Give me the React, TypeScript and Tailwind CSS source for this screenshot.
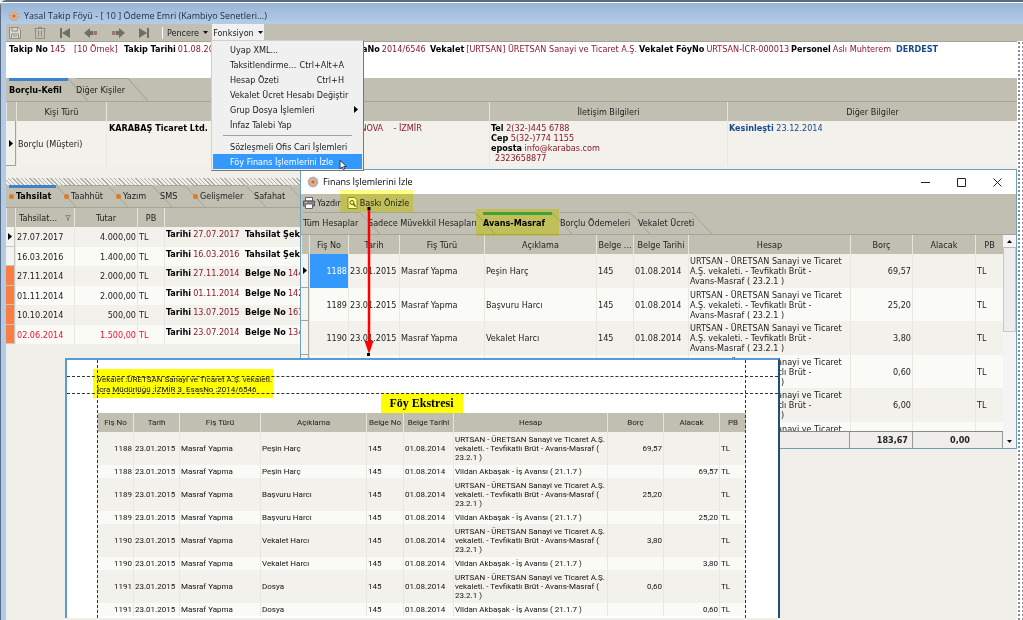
import React from 'react';

const UI_FONT = "font-['DejaVu_Sans_Condensed','DejaVu_Sans',sans-serif]";
const CAPTION_FONT = "font-['Open_Sans','Noto_Sans',sans-serif]";
const NARROW_FONT = "font-['Roboto','Liberation_Sans',sans-serif]";

type CollectionRow = {
  date: string;
  amount: string;
  docDate: string;
  label: string;
  value: string;
  marked?: boolean;
  overdue?: boolean;
};

const collections: CollectionRow[] = [
  { date: '27.07.2017', amount: '4.000,00', docDate: '27.07.2017', label: 'Tahsilat Şekli', value: '' },
  { date: '16.03.2016', amount: '1.400,00', docDate: '16.03.2016', label: 'Tahsilat Şekli', value: '' },
  { date: '27.11.2014', amount: '2.000,00', docDate: '27.11.2014', label: 'Belge No', value: '144', marked: true },
  { date: '01.11.2014', amount: '2.000,00', docDate: '01.11.2014', label: 'Belge No', value: '142', marked: true },
  { date: '10.10.2014', amount: '500,00', docDate: '13.07.2015', label: 'Belge No', value: '161', marked: true },
  { date: '02.06.2014', amount: '1.500,00', docDate: '23.07.2014', label: 'Belge No', value: '134', marked: true, overdue: true },
];

const financeRows = [
  { no: '1188', name: 'Peşin Harç', debit: '69,57' },
  { no: '1189', name: 'Başvuru Harcı', debit: '25,20' },
  { no: '1190', name: 'Vekalet Harcı', debit: '3,80' },
  { no: '1191', name: 'Dosya', debit: '0,60' },
  { no: '1192', name: 'Vekalet Pulu', debit: '6,00' },
  { no: '1193', name: 'Tebligat', debit: '' },
];

const reportRows = [
  { no: '1188', name: 'Peşin Harç', amount: '69,57' },
  { no: '1189', name: 'Başvuru Harcı', amount: '25,20' },
  { no: '1190', name: 'Vekalet Harcı', amount: '3,80' },
  { no: '1191', name: 'Dosya', amount: '0,60' },
];

const FINANCE_ACCOUNT = 'URTSAN - ÜRETSAN Sanayi ve Ticaret\nA.Ş. vekaleti. - Tevfikatlı Brüt -\nAvans-Masraf ( 23.2.1 )';
const REPORT_ACCOUNT = 'URTSAN - ÜRETSAN Sanayi ve Ticaret A.Ş.\nvekaleti. - Tevfikatlı Brüt - Avans-Masraf (\n23.2.1 )';

const AppLogo = () => (
  <svg viewBox="0 0 12 12" className="size-3 shrink-0">
    <circle cx="6" cy="6" r="5.4" fill="#c9b9ae" />
    <circle cx="6" cy="6" r="4.2" fill="none" stroke="#a8a4a6" strokeWidth="1.2" strokeDasharray="2 1.2" />
    <circle cx="6" cy="6" r="2.6" fill="#f0a878" />
    <circle cx="6" cy="6" r="1.5" fill="#d9691e" />
  </svg>
);

const SaveIcon = () => (
  <svg viewBox="0 0 12 12" className="size-3" fill="none" stroke="#8f8f86">
    <path d="M.5.5h9l2 2v9H.5z" fill="#d8d8d0" />
    <path d="M3 .5V4h5.5V.5M2.5 11.5V7h7v4.5M4 9h4" />
  </svg>
);

const TrashIcon = () => (
  <svg viewBox="0 0 12 12" className="size-3" fill="none" stroke="#8f8f86">
    <path d="M.5 1.5h11M4 .5h4M1.5 1.5v10h9v-10M4.5 3.5v6M7.5 3.5v6" />
  </svg>
);

const FirstIcon = () => (
  <svg viewBox="0 0 12 12" className="size-3" fill="#6f6f68">
    <path d="M1 1h2v10H1zM3 6l8-5v10z" />
  </svg>
);

const PrevIcon = () => (
  <svg viewBox="0 0 14 12" className="h-3 w-3.5" fill="#6f6f68">
    <path d="M0 6l6-5v3h3v4H6v3z" />
    <path d="M9.5 4H13v4H9.5z" fill="#a37566" />
  </svg>
);

const NextIcon = () => (
  <svg viewBox="0 0 14 12" className="h-3 w-3.5" fill="#6f6f68">
    <path d="M14 6L8 1v3H5v4h3v3z" />
    <path d="M1 4h3.5v4H1z" fill="#a37566" />
  </svg>
);

const LastIcon = () => (
  <svg viewBox="0 0 12 12" className="size-3" fill="#6f6f68">
    <path d="M9 1h2v10H9zM9 6L1 1v10z" />
  </svg>
);

const PrinterIcon = () => (
  <svg viewBox="0 0 12 12" className="size-3">
    <path d="M2.5.5h7V4h-7z" fill="#fff" stroke="#666" />
    <path d="M.5 4h11v5H.5z" fill="#88888a" stroke="#555" />
    <path d="M2.5 7h7v4.5h-7z" fill="#fff" stroke="#666" />
    <path d="M2 5.5h1.5" stroke="#ddd" />
  </svg>
);

const PreviewIcon = () => (
  <svg viewBox="0 0 11 12" className="h-3 w-[11px]" fill="none">
    <path d="M1 .5h6.5L10 3v8.5H1z" fill="#fff" stroke="#88885a" />
    <circle cx="5" cy="5.5" r="2" stroke="#55553a" />
    <path d="M6.5 7l2 2.5" stroke="#55553a" strokeWidth="1.3" />
  </svg>
);

const CaretDown = () => (
  <svg viewBox="0 0 5 3" className="h-[3px] w-[5px]">
    <path d="M0 0h5L2.5 3z" fill="#111" />
  </svg>
);

const RowPointer = () => (
  <svg viewBox="0 0 4 7" className="mx-auto h-[7px] w-1">
    <path d="M0 0l4 3.5L0 7z" fill="#000" />
  </svg>
);

interface TabProps {
  label: string;
  width: string;
  active?: boolean;
  dot?: boolean;
  accent?: string;
}

const Tab: React.FC<TabProps> = ({ label, width, active, dot, accent = 'bg-[#3c82cc]' }) => (
  <button
    role="tab"
    aria-selected={!!active}
    className={`relative flex h-full shrink-0 items-center gap-0.5 whitespace-nowrap text-left ${width} ${active ? 'font-bold text-black' : 'text-[#222]'}`}
  >
    <span className={`absolute left-0 right-2 top-0 ${active ? `h-[3px] ${accent}` : 'h-px bg-[#a5a496]'}`} />
    <svg viewBox="0 0 20 22" preserveAspectRatio="none" className="absolute -right-3 top-0 h-full w-5" fill="none" stroke="#a5a496">
      <path d="M0 .5L20 22" />
    </svg>
    {dot && <span className="size-[5px] shrink-0 rounded-full bg-[#e07a22]" />}
    {label}
  </button>
);

const Field: React.FC<{ label: string; value: string }> = ({ label, value }) => (
  <span className="flex gap-0.5 whitespace-nowrap">
    <b className="text-black">{label}</b>
    <span className="text-[#8b1a2b]">{value}</span>
  </span>
);

const headCell = 'border-l border-[#e6e5dc] bg-[#c0bfb2] p-0 text-center font-normal text-[#222] whitespace-nowrap overflow-hidden';
const bodyCell = 'border-l border-[#e9e8e0] px-px py-0 whitespace-nowrap overflow-hidden';

const FunctionMenu = () => {
  const item = 'flex h-[15px] w-full items-center justify-between pl-[17px] pr-[18px] text-left whitespace-nowrap';
  return (
    <div role="menu" className="absolute left-[211px] top-10 z-30 w-[153px] border border-[#d0d0d0] border-b-[#777] border-r-[#777] bg-[#f0f0f0] p-px text-[#1a1a1a]">
      <button role="menuitem" className={item}>Uyap XML...</button>
      <button role="menuitem" className={item}><span>Taksitlendirme...</span><span>Ctrl+Alt+A</span></button>
      <button role="menuitem" className={item}><span>Hesap Özeti</span><span>Ctrl+H</span></button>
      <button role="menuitem" className={item}>Vekalet Ücret Hesabı Değiştir</button>
      <button role="menuitem" className="flex h-[15px] w-full items-center justify-between pl-[17px] pr-1 text-left">
        <span>Grup Dosya İşlemleri</span>
        <svg viewBox="0 0 4 7" className="h-[7px] w-1"><path d="M0 0l4 3.5L0 7z" fill="#000" /></svg>
      </button>
      <button role="menuitem" className={item}>İnfaz Talebi Yap</button>
      <hr className="mx-2.5 my-[3px] border-[#a0a0a0]" />
      <button role="menuitem" className={item}>Sözleşmeli Ofis Cari İşlemleri</button>
      <button role="menuitem" className={`${item} bg-[#3399ff] text-white`}>Föy Finans İşlemlerini İzle</button>
      <svg viewBox="0 0 8 12" className="absolute right-4 bottom-0 h-2.5 w-2">
        <path d="M.5.5v10L3 8.3l1.5 3.2 1.5-.7-1.3-3H8z" fill="#fff" stroke="#000" strokeWidth=".8" />
      </svg>
    </div>
  );
};

const FinanceWindow = () => (
  <section className="absolute left-[300px] right-[6px] top-[169px] z-10 flex h-[280px] flex-col border border-[#6fa0b4] bg-[#c0bfb2]">
    <header className={`flex h-6 shrink-0 items-center bg-white pl-1.5 pr-3.5 text-black ${CAPTION_FONT}`}>
      <AppLogo />
      <h2 className="ml-1 flex-1">Finans İşlemlerini İzle</h2>
      <div className="flex items-center gap-[27px]">
        <button aria-label="Küçült"><svg viewBox="0 0 9 9" className="size-[9px]" stroke="#222"><path d="M0 4.5h9" /></svg></button>
        <button aria-label="Büyüt"><svg viewBox="0 0 9 9" className="size-[9px]" fill="none" stroke="#222"><path d="M.5.5h8v8h-8z" /></svg></button>
        <button aria-label="Kapat"><svg viewBox="0 0 9 9" className="size-[9px]" stroke="#222"><path d="M.5.5l8 8M8.5.5l-8 8" /></svg></button>
      </div>
    </header>
    <div className="flex h-[18px] shrink-0 items-center gap-1.5 pl-0.5">
      <button className="flex items-center gap-0.5"><PrinterIcon /> Yazdır</button>
      <button className="flex items-center gap-0.5"><PreviewIcon /> Baskı Önizle</button>
    </div>
    <div role="tablist" className="flex h-[23px] shrink-0 border-b border-[#a5a496] pl-0.5">
      <Tab label="Tüm Hesaplar" width="w-[65px]" />
      <Tab label="Sadece Müvekkil Hesapları" width="w-[115px]" />
      <Tab label="Avans-Masraf" width="w-[77px]" active accent="bg-[#3fa078]" />
      <Tab label="Borçlu Ödemeleri" width="w-[78px]" />
      <Tab label="Vekalet Ücreti" width="w-[62px]" />
    </div>
    <div className="flex min-h-0 flex-1">
      <div className="flex min-w-0 flex-1 flex-col">
        <div className="min-h-0 flex-1 overflow-hidden">
          <table className="w-full table-fixed border-separate border-spacing-0">
            <colgroup>
              <col className="w-[8px]" />
              <col className="w-[39px]" />
              <col className="w-[51px]" />
              <col className="w-[85px]" />
              <col className="w-[112px]" />
              <col className="w-[37px]" />
              <col className="w-[55px]" />
              <col />
              <col className="w-[62px]" />
              <col className="w-[63px]" />
              <col className="w-[28px]" />
            </colgroup>
            <thead>
              <tr className="h-[19px]">
                <th className={headCell} />
                <th className={headCell}>Fiş No</th>
                <th className={headCell}>Tarih</th>
                <th className={headCell}>Fiş Türü</th>
                <th className={headCell}>Açıklama</th>
                <th className={headCell}>Belge ...</th>
                <th className={headCell}>Belge Tarihi</th>
                <th className={headCell}>Hesap</th>
                <th className={headCell}>Borç</th>
                <th className={headCell}>Alacak</th>
                <th className={headCell}>PB</th>
              </tr>
            </thead>
            <tbody>
              {financeRows.map((row, i) => (
                <tr key={row.no} className="odd:h-[34px] odd:bg-[#f2f1eb] even:h-[33px] even:bg-[#fafaf6]">
                  <td className="border-b border-r border-[#a5a496] bg-[#f4f4f0] p-0">{i === 0 && <RowPointer />}</td>
                  <td className={`${bodyCell} text-right ${i === 0 ? 'bg-[#3399ff] text-white' : ''}`}>{row.no}</td>
                  <td className={bodyCell}>23.01.2015</td>
                  <td className={bodyCell}>Masraf Yapma</td>
                  <td className={bodyCell}>{row.name}</td>
                  <td className={bodyCell}>145</td>
                  <td className={bodyCell}>01.08.2014</td>
                  <td className={`${bodyCell} whitespace-pre! leading-[10px]`}>{FINANCE_ACCOUNT}</td>
                  <td className={`${bodyCell} text-right`}>{row.debit}</td>
                  <td className={bodyCell} />
                  <td className={bodyCell}>TL</td>
                </tr>
              ))}
            </tbody>
          </table>
        </div>
        <div className="flex h-[17px] shrink-0 border-t border-[#888] bg-[#efeeea] text-right font-bold leading-4 text-[#222]">
          <span className="flex-1" />
          <span className="w-[63px] border-l border-[#999] pr-1">183,67</span>
          <span className="w-[91px] border-x border-[#999] pr-8">0,00</span>
        </div>
      </div>
      <div className="flex w-[13px] shrink-0 flex-col items-center bg-[#f4f4f4]">
        <div className="flex h-[13px] w-full items-center justify-center border-b border-[#bbb]">
          <svg viewBox="0 0 5 3" className="h-[3px] w-[5px]"><path d="M0 3h5L2.5 0z" fill="#000" /></svg>
        </div>
        <div className="h-[84px] w-full border border-t-0 border-[#c8c8c8] bg-[#ededed]" />
        <div className="flex-1" />
        <div className="flex h-[13px] items-center"><CaretDown /></div>
      </div>
    </div>
  </section>
);

const ReportPreview = () => (
  <section className={`absolute left-[65px] top-[358px] z-20 flex h-[260px] w-[715px] flex-col overflow-hidden border-2 border-b-0 border-[#5b9bd5] border-r-[#1f4e79] bg-white pl-[30px] pr-8 text-[8px] text-[#111] ${NARROW_FONT}`}>
    <div className="h-[33px] shrink-0 pt-[9px]">
      <p className="-ml-1 h-[29px] w-[180px] whitespace-nowrap bg-[#ffff00] pl-1 pt-1.5 leading-[10px]">
        Vekalet :ÜRETSAN Sanayi ve Ticaret A.Ş. vekaleti.<br />
        İcra Müdürlüğü :İZMİR 3&nbsp; EsasNo :2014/6546
      </p>
    </div>
    <h3 className="h-5 w-[82px] shrink-0 self-center bg-[#ffff00] text-center font-['Liberation_Serif',serif] text-[12px] font-bold leading-5 whitespace-nowrap text-black">
      Föy Ekstresi
    </h3>
    <table className="w-full shrink-0 table-fixed border-separate border-spacing-0">
      <colgroup>
        <col className="w-9" />
        <col className="w-[46px]" />
        <col className="w-[81px]" />
        <col className="w-[106px]" />
        <col className="w-[37px]" />
        <col className="w-[50px]" />
        <col />
        <col className="w-[56px]" />
        <col className="w-[56px]" />
        <col className="w-[27px]" />
      </colgroup>
      <thead>
        <tr className="h-[19px]">
          <th className={headCell}>Fiş No</th>
          <th className={headCell}>Tarih</th>
          <th className={headCell}>Fiş Türü</th>
          <th className={headCell}>Açıklama</th>
          <th className={headCell}>Belge No</th>
          <th className={headCell}>Belge Tarihi</th>
          <th className={headCell}>Hesap</th>
          <th className={headCell}>Borç</th>
          <th className={headCell}>Alacak</th>
          <th className={headCell}>PB</th>
        </tr>
      </thead>
      <tbody>
        {reportRows.map((row) => (
          <React.Fragment key={row.no}>
            {[true, false].map((isDebit) => (
              <tr key={String(isDebit)} className={isDebit ? 'h-[33px] bg-[#f2f1eb]' : 'h-[13px] bg-[#fafaf6] leading-[13px]'}>
                <td className={`${bodyCell} text-right`}>{row.no}</td>
                <td className={bodyCell}>23.01.2015</td>
                <td className={bodyCell}>Masraf Yapma</td>
                <td className={bodyCell}>{row.name}</td>
                <td className={bodyCell}>145</td>
                <td className={bodyCell}>01.08.2014</td>
                <td className={`${bodyCell} whitespace-pre! ${isDebit ? 'leading-[9px]' : ''}`}>{isDebit ? REPORT_ACCOUNT : 'Vildan Akbaşak - İş Avansı ( 21.1.7 )'}</td>
                <td className={`${bodyCell} text-right`}>{isDebit && row.amount}</td>
                <td className={`${bodyCell} text-right`}>{!isDebit && row.amount}</td>
                <td className={bodyCell}>TL</td>
              </tr>
            ))}
          </React.Fragment>
        ))}
      </tbody>
    </table>
    {/* page margin guides */}
    <div className="pointer-events-none absolute inset-y-0 left-[30px] right-8 border-x border-dashed border-[#333]" />
    <div className="pointer-events-none absolute inset-x-0 top-4 h-[18px] border-y border-dashed border-[#333]" />
  </section>
);

export default function App() {
  return (
    <main className={`relative h-screen min-h-[620px] overflow-hidden bg-[#f0efea] text-[9px] leading-3 text-[#222] ${UI_FONT}`}>
      <div className="flex h-full flex-col rounded-tl-md border-l border-t-2 border-[#5b6b80] bg-[#b1cbe9]">
        <header className={`flex h-[22px] shrink-0 items-center gap-1 border-t border-white bg-linear-to-b from-[#9ab4d6] to-[#b3cde9] pl-[7px] pt-1 text-[#1c2a3c] ${CAPTION_FONT}`}>
          <AppLogo />
          <h1>Yasal Takip Föyü - [ 10 ] Ödeme Emri (Kambiyo Senetleri...)</h1>
        </header>

        <div className="ml-[5px] flex min-h-0 flex-1 flex-col bg-[#f0efea]">
          <div className="flex h-[17px] shrink-0 items-center bg-[#c0bfb2] pl-[3px]">
            <div className="flex w-[154px] items-center justify-between border-r border-white pr-3">
              <button aria-label="Kaydet"><SaveIcon /></button>
              <button aria-label="Sil"><TrashIcon /></button>
              <button aria-label="İlk kayıt"><FirstIcon /></button>
              <button aria-label="Önceki kayıt"><PrevIcon /></button>
              <button aria-label="Sonraki kayıt"><NextIcon /></button>
              <button aria-label="Son kayıt"><LastIcon /></button>
            </div>
            <button className="flex w-[49px] items-center justify-center gap-1">Pencere <CaretDown /></button>
            <button className="flex h-full w-[52px] items-center justify-center gap-1 bg-[#f0f0f0]">Fonksiyon <CaretDown /></button>
          </div>

          <div className="flex min-h-0 flex-1">
            <div className="flex min-w-0 flex-1 flex-col">
              <div className="grid h-[37px] shrink-0 grid-cols-[65px_50px_238px_68px_209px_152px_105px_1fr] border-t border-[#a5a496] bg-white pl-[3px] pt-px">
                <Field label="Takip No" value="145" />
                <span className="text-[#8b1a2b]">[10 Örnek]</span>
                <Field label="Takip Tarihi" value="01.08.2014" />
                <Field label="aNo" value="2014/6546" />
                <Field label="Vekalet" value="[URTSAN] ÜRETSAN Sanayi ve Ticaret A.Ş." />
                <Field label="Vekalet FöyNo" value="URTSAN-İCR-000013" />
                <Field label="Personel" value="Aslı Muhterem" />
                <b className="text-[#174a8c]">DERDEST</b>
              </div>

              <div role="tablist" className="flex h-6 shrink-0 border-b border-[#a5a496] bg-[#c0bfb2] pl-[3px]">
                <Tab label="Borçlu-Kefil" width="w-[67px]" active />
                <Tab label="Diğer Kişiler" width="w-[60px]" />
              </div>

              <table className="w-full shrink-0 table-fixed border-separate border-spacing-0">
                <colgroup>
                  <col className="w-[10px]" />
                  <col className="w-[90px]" />
                  <col className="w-[383px]" />
                  <col className="w-[238px]" />
                  <col />
                </colgroup>
                <thead>
                  <tr className="h-[19px]">
                    <th className={headCell} />
                    <th className={headCell}>Kişi Türü</th>
                    <th className={headCell} />
                    <th className={headCell}>İletişim Bilgileri</th>
                    <th className={headCell}>Diğer Bilgiler</th>
                  </tr>
                </thead>
                <tbody>
                  <tr className="h-[45px] bg-[#f2f1eb]">
                    <td className="border-b border-r border-[#a5a496] p-0"><RowPointer /></td>
                    <td className={bodyCell}>Borçlu (Müşteri)</td>
                    <td className={`${bodyCell} align-top`}>
                      <div className="grid grid-cols-[234px_1fr] pl-px pt-px">
                        <b className="text-black">KARABAŞ Ticaret Ltd. Şti.</b>
                        <span className="text-[#8b1a2b]">BORNOVA&nbsp;&nbsp;&nbsp; - İZMİR</span>
                      </div>
                    </td>
                    <td className={`${bodyCell} align-top leading-[10px] text-[#8b1a2b]`}>
                      <p className="pt-0.5"><b className="text-black">Tel</b> 2(32-)445 6788</p>
                      <p><b className="text-black">Cep</b> 5(32-)774 1155</p>
                      <p><b className="text-black">eposta</b> info@karabas.com</p>
                      <p className="pl-1">2323658877</p>
                    </td>
                    <td className={`${bodyCell} align-top text-[#174a8c]`}>
                      <p className="pt-px"><b>Kesinleşti</b> 23.12.2014</p>
                    </td>
                  </tr>
                </tbody>
              </table>

              <div className="mt-3 h-[7px] shrink-0 bg-[repeating-linear-gradient(45deg,#b0b0a8_0_1px,#efeeea_1px_3px)]" />

              <div role="tablist" className="flex h-[23px] shrink-0 border-b border-[#a5a496] bg-[#c0bfb2] pl-[3px]">
                <Tab label="Tahsilat" width="w-[55px]" dot active />
                <Tab label="Taahhüt" width="w-[52px]" dot />
                <Tab label="Yazım" width="w-[44px]" dot />
                <Tab label="SMS" width="w-[33px]" />
                <Tab label="Gelişmeler" width="w-[61px]" dot />
                <Tab label="Safahat" width="w-[43px]" />
              </div>

              <table className="w-full shrink-0 table-fixed border-separate border-spacing-0">
                <colgroup>
                  <col className="w-[9px]" />
                  <col className="w-[59px]" />
                  <col className="w-[63px]" />
                  <col className="w-[27px]" />
                  <col />
                </colgroup>
                <thead>
                  <tr className="h-[19px]">
                    <th className={headCell} />
                    <th className={headCell}>
                      <span className="flex items-center justify-between px-[3px]">
                        Tahsilat...
                        <svg viewBox="0 0 6 6" className="size-1.5" fill="none" stroke="#8d8c80"><path d="M.5.5h5L3.5 3v3l-1-1V3z" /></svg>
                      </span>
                    </th>
                    <th className={headCell}>Tutar</th>
                    <th className={headCell}>PB</th>
                    <th className={headCell} />
                  </tr>
                </thead>
                <tbody>
                  {collections.map((row, i) => (
                    <tr key={row.date} className={`odd:h-[20px] odd:bg-[#f2f1eb] even:h-[19px] even:bg-[#fafaf6] ${row.overdue ? 'text-[#f0142d]' : ''}`}>
                      <td className={`border-b border-r border-[#c9c8bf] p-0 ${row.marked ? 'bg-[#fb7d42]' : 'bg-[#f4f4f0]'}`}>{i === 0 && <RowPointer />}</td>
                      <td className={bodyCell}>{row.date}</td>
                      <td className={`${bodyCell} text-right`}>{row.amount}</td>
                      <td className={bodyCell}>TL</td>
                      <td className={`${bodyCell} align-top`}>
                        <div className="grid grid-cols-[79px_1fr] pt-px">
                          <Field label="Tarihi" value={row.docDate} />
                          <Field label={row.label} value={row.value} />
                        </div>
                      </td>
                    </tr>
                  ))}
                </tbody>
              </table>
            </div>
            <div className="w-[6px] shrink-0 bg-white bg-[radial-gradient(#8a8a9a_1px,transparent_1px)] bg-[size:4px_4px]" />
          </div>
        </div>
      </div>

      <FunctionMenu />
      <FinanceWindow />
      <ReportPreview />

      {/* marker highlights and the arrow from the toolbar to the report */}
      <div className="pointer-events-none absolute left-[340px] top-[190px] z-30 h-[22px] w-[73px] bg-[#ffff80] mix-blend-multiply" />
      <div className="pointer-events-none absolute left-[476px] top-[209px] z-30 h-[27px] w-[83px] bg-[#ffff80] mix-blend-multiply" />
      <svg viewBox="0 0 10 150" className="pointer-events-none absolute left-[364px] top-[207px] z-30 h-[150px] w-2.5">
        <path d="M5 2v134" stroke="#f00" strokeWidth="2.5" />
        <path d="M.5 134h9L5 147z" fill="#f00" />
        <path d="M3.5 0h3v3h-3zM3 146h3v3H3z" fill="#000" />
      </svg>
    </main>
  );
}
